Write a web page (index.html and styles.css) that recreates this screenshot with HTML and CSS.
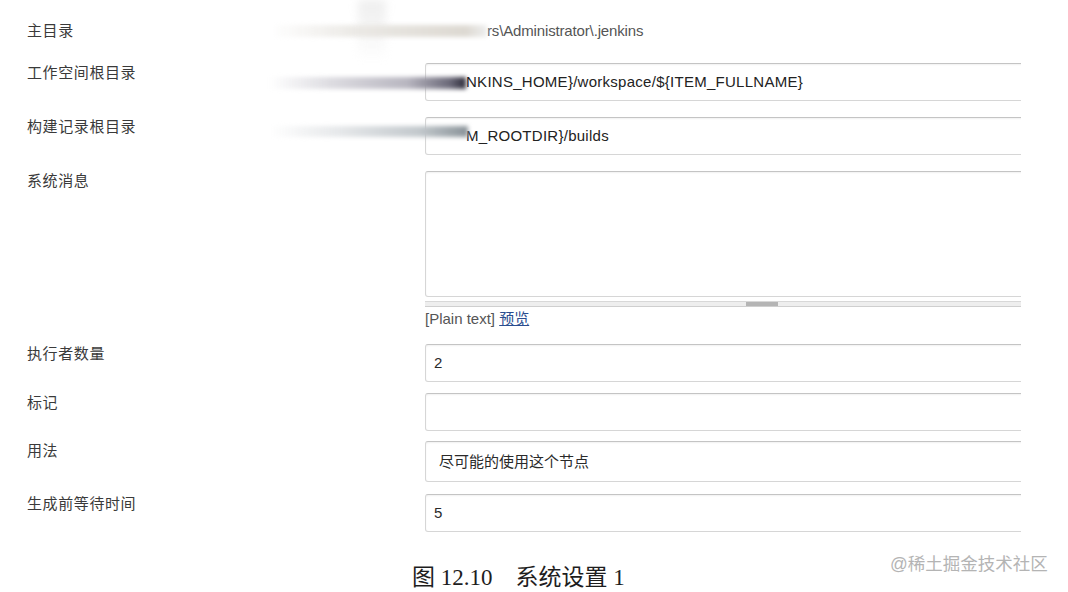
FILE: index.html
```html
<!DOCTYPE html>
<html lang="zh-CN">
<head>
  <meta charset="UTF-8" />
  <meta name="viewport" content="width=device-width, initial-scale=1.0" />
  <title>系统设置</title>
  <link rel="stylesheet" href="styles.css">
</head>
<body>

<div class="streak"></div>

<main class="form">
  <div class="row row-home">
    <div class="label">主目录</div>
    <div class="field">
      <span class="plain">rs\Administrator\.jenkins</span>
    </div>
    <div class="smear smear-home"></div>
  </div>

  <div class="row row-workspace">
    <div class="label">工作空间根目录</div>
    <div class="field">
      <div class="box box-cut">NKINS_HOME}/workspace/${ITEM_FULLNAME}</div>
    </div>
    <div class="smear smear-workspace"></div>
  </div>

  <div class="row row-builds">
    <div class="label">构建记录根目录</div>
    <div class="field">
      <div class="box box-cut">M_ROOTDIR}/builds</div>
    </div>
    <div class="smear smear-builds"></div>
  </div>

  <div class="row row-message">
    <div class="label">系统消息</div>
    <div class="field">
      <div class="box area"></div>
      <div class="resize"><span class="grip"></span></div>
      <div class="markup">[Plain text] <a href="#">预览</a></div>
    </div>
  </div>

  <div class="row row-executors">
    <div class="label">执行者数量</div>
    <div class="field">
      <div class="box">2</div>
    </div>
  </div>

  <div class="row row-labels">
    <div class="label">标记</div>
    <div class="field">
      <div class="box"></div>
    </div>
  </div>

  <div class="row row-usage">
    <div class="label">用法</div>
    <div class="field">
      <div class="box select">尽可能的使用这个节点</div>
    </div>
  </div>

  <div class="row row-quiet">
    <div class="label">生成前等待时间</div>
    <div class="field">
      <div class="box">5</div>
    </div>
  </div>
</main>

<footer class="figure">
  <span class="caption">图 12.10　系统设置 1</span>
  <span class="watermark">@稀土掘金技术社区</span>
</footer>

</body>
</html>
```

FILE: styles.css
```css
* {
  margin: 0;
  padding: 0;
  box-sizing: border-box;
}

body, html {
  height: 100%;
  overflow: hidden;
  background: #fff;
}

body {
  position: relative;
  font-family: "Liberation Sans", "Noto Sans CJK SC", sans-serif;
  color: #333;
}

.form {
  padding: 21px 47px 0 27px;
}

.row {
  position: relative;
  display: flex;
  align-items: flex-start;
}

.label {
  width: 398px;
  flex-shrink: 0;
  font-size: 15px;
  line-height: 20px;
  letter-spacing: 0.6px;
  color: #3a3a3a;
}

.field {
  flex: 1;
  min-width: 0;
  overflow: hidden;
}

.plain {
  display: block;
  padding-left: 62px;
  font-size: 15px;
  line-height: 20px;
  letter-spacing: -0.15px;
  color: #555;
}

.box {
  width: calc(100% + 78px);
  height: 38px;
  border: 1px solid #d6d6d6;
  border-top-color: #c4c4c4;
  border-radius: 3px;
  box-shadow: inset 0 1px 2px rgba(0, 0, 0, 0.06);
  padding: 0 8px;
  font-size: 15px;
  line-height: 36px;
  color: #2a2a2a;
  white-space: nowrap;
}

.box-cut {
  padding-left: 40px;
  letter-spacing: 0.27px;
  color: #222;
}

.area {
  height: 126px;
}

.select {
  height: 41px;
  line-height: 39px;
  padding-left: 13px;
}

.resize {
  width: calc(100% + 78px);
  height: 6px;
  margin-top: 4px;
  border-top: 1px solid #d8d8d8;
  border-bottom: 1px solid #cfcfcf;
  background: #eee;
  display: flex;
  justify-content: center;
}

.grip {
  width: 32px;
  height: 4px;
  background: #b5b5b5;
}

.markup {
  margin-top: 2px;
  font-size: 15px;
  line-height: 20px;
  color: #555;
}

.markup a {
  color: #2a4d8f;
}

.row-workspace { margin-top: 22px; }
.row-builds { margin-top: 16px; }
.row-message { margin-top: 16px; }
.row-executors { margin-top: 15px; }
.row-labels { margin-top: 11px; }
.row-usage { margin-top: 10px; }
.row-quiet { margin-top: 12px; }

/* motion blur left on the captured screenshot */
.smear {
  position: absolute;
  left: 243px;
  filter: blur(2px);
}

.smear-home {
  top: 4px;
  width: 217px;
  height: 12px;
  background: linear-gradient(90deg, rgba(220, 220, 220, 0), #ebe9e5 40%, #ddd9d2 90%, #eee);
}

.smear-workspace {
  top: 14px;
  width: 196px;
  height: 12px;
  background: linear-gradient(90deg, rgba(200, 200, 205, 0), #dedde2 30%, #b8b6c0 70%, #6a6878 92%, #2e2c3a);
}

.smear-builds {
  top: 9px;
  width: 198px;
  height: 11px;
  background: linear-gradient(90deg, rgba(210, 215, 218, 0), #e6e8ea 35%, #c3c9cd 75%, #8a9399 100%);
}

.streak {
  position: absolute;
  left: 358px;
  top: 0;
  width: 28px;
  height: 62px;
  background: linear-gradient(180deg, #eeeeee, rgba(245, 245, 245, 0));
  filter: blur(4px);
}

.figure {
  position: relative;
  margin-top: 32px;
  height: 40px;
}

.caption {
  position: absolute;
  left: 412px;
  top: 0;
  font-family: "Liberation Serif", "Noto Sans CJK SC", serif;
  font-size: 23px;
  line-height: 28px;
  color: #1e1e1e;
}

.watermark {
  position: absolute;
  left: 890px;
  top: -11px;
  font-size: 17.5px;
  line-height: 22px;
  color: #b4b4b4;
}
```
